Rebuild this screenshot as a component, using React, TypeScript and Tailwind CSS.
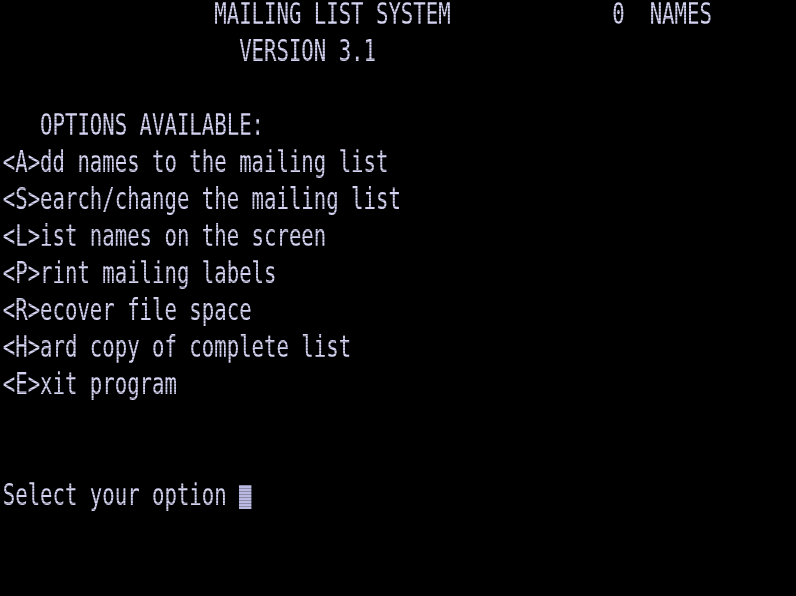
import React from "react";

const rows: string[] = [
  "                 MAILING LIST SYSTEM             0  NAMES",
  "                   VERSION 3.1",
  "",
  "   OPTIONS AVAILABLE:",
  "<A>dd names to the mailing list",
  "<S>earch/change the mailing list",
  "<L>ist names on the screen",
  "<P>rint mailing labels",
  "<R>ecover file space",
  "<H>ard copy of complete list",
  "<E>xit program",
  "",
  "",
  "Select your option ",
  "",
  "",
];

export default function App() {
  return (
    <div className="w-[796px] h-[596px] bg-black overflow-hidden relative">
      {/* terminal text, 64 cols x 16 rows, glyphs squeezed horizontally */}
      <div className="origin-top-left scale-x-[0.6888] w-[1150px] pl-[4px] -mt-[5px] text-[#d4d4f2] text-[30px] font-['DejaVu_Sans_Mono',monospace] blur-[0.4px]">
        {rows.map((line, i) => (
          <div key={i} className="h-[37px] leading-[37px] whitespace-pre">
            {line}
            {i === 13 && <span className="inline-block w-[18px] h-[24px] bg-[#b9b9e2] align-[-4px]" />}
          </div>
        ))}
      </div>
      {/* scanlines */}
      <div className="absolute inset-0 pointer-events-none bg-[repeating-linear-gradient(to_bottom,transparent_0px,transparent_2px,rgba(0,0,0,0.25)_2px,rgba(0,0,0,0.25)_3px)]" />
    </div>
  );
}
